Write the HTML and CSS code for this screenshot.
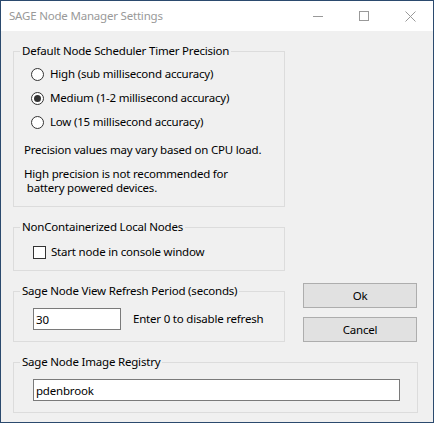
FILE: index.html
```html
<!DOCTYPE html>
<html lang="en">
<head>
<meta charset="utf-8">
<title>SAGE Node Manager Settings</title>
<link rel="stylesheet" href="styles.css">
</head>
<body>
<div class="window">
  <div class="titlebar">
    <span class="title">SAGE Node Manager Settings</span>
    <div class="controls">
      <span class="ctl"><svg width="10" height="10" viewBox="0 0 10 10"><line x1="0" y1="5.5" x2="10" y2="5.5" stroke="#999" stroke-width="1"/></svg></span>
      <span class="ctl"><svg width="10" height="10" viewBox="0 0 10 10"><rect x="0.5" y="0.5" width="9" height="9" fill="none" stroke="#999" stroke-width="1"/></svg></span>
      <span class="ctl"><svg width="11" height="11" viewBox="0 0 11 11"><path d="M0.5 0.5 L10.5 10.5 M10.5 0.5 L0.5 10.5" stroke="#999" stroke-width="1" fill="none"/></svg></span>
    </div>
  </div>
  <div class="client">
    <fieldset class="group g-precision">
      <legend>Default Node Scheduler Timer Precision</legend>
      <div class="radio"><span class="radio-mark"></span><span>High (sub millisecond accuracy)</span></div>
      <div class="radio"><span class="radio-mark checked"></span><span>Medium (1-2 millisecond accuracy)</span></div>
      <div class="radio"><span class="radio-mark"></span><span>Low (15 millisecond accuracy)</span></div>
      <p class="note">Precision values may vary based on CPU load.</p>
      <p class="note note-two">High precision is not recommended for<br>&nbsp;battery powered devices.</p>
    </fieldset>
    <fieldset class="group g-local">
      <legend>NonContainerized Local Nodes</legend>
      <div class="check"><span class="check-mark"></span><span>Start node in console window</span></div>
    </fieldset>
    <fieldset class="group g-refresh">
      <legend>Sage Node View Refresh Period (seconds)</legend>
      <div class="refresh-row">
        <input class="textbox short" type="text" value="30">
        <span class="hint">Enter 0 to disable refresh</span>
      </div>
    </fieldset>
    <div class="buttons">
      <button class="btn" type="button">Ok</button>
      <button class="btn" type="button">Cancel</button>
    </div>
    <fieldset class="group g-registry">
      <legend>Sage Node Image Registry</legend>
      <input class="textbox long" type="text" value="pdenbrook">
    </fieldset>
  </div>
</div>
</body>
</html>
```
FILE: styles.css
```css
* { box-sizing: border-box; }
html, body { margin: 0; padding: 0; }
body {
  font-family: "Noto Sans", "Open Sans", sans-serif;
  font-size: 11.5px;
  letter-spacing: -0.2px;
  color: #000;
  background: #f0f0f0;
}
.window {
  width: 434px;
  height: 423px;
  border: 1px solid #2b4a6e;
  background: #f0f0f0;
  display: flex;
  flex-direction: column;
}
.titlebar {
  height: 30px;
  background: #fff;
  display: flex;
  align-items: center;
  flex: none;
}
.title {
  padding-left: 8px;
  color: #999;
  line-height: 16px;
  flex: 1;
}
.controls { display: flex; height: 30px; }
.ctl {
  width: 46px;
  height: 30px;
  display: flex;
  align-items: center;
  justify-content: center;
}
.ctl svg { display: block; }
.client {
  flex: 1;
  display: grid;
  grid-template-columns: 272px 114px;
  column-gap: 18px;
  row-gap: 12px;
  align-items: start;
  align-content: start;
  padding: 12px 0 0 12px;
}
.group {
  margin: 0;
  border: 1px solid #dcdcdc;
  padding: 0;
  min-width: 0;
}
.group legend {
  margin-left: 6px;
  padding: 0 2px;
  line-height: 16px;
  height: 16px;
}
.g-precision { grid-column: 1; grid-row: 1; padding: 3px 0 11px 0; }
.g-local { grid-column: 1; grid-row: 2; padding: 9px 0 10px 0; }
.g-refresh { grid-column: 1; grid-row: 3; padding: 9px 0 11px 0; }
.buttons { grid-column: 2; grid-row: 3; display: flex; flex-direction: column; gap: 9px; }
.g-registry { grid-column: 1 / -1; grid-row: 4; width: 405px; padding: 9px 0 11px 0; }

.radio {
  height: 24px;
  display: flex;
  align-items: center;
  gap: 6px;
  padding-left: 17px;
  line-height: 16px;
}
.radio-mark {
  width: 13px;
  height: 13px;
  border: 1px solid #333;
  border-radius: 50%;
  background: #fff;
  display: flex;
  align-items: center;
  justify-content: center;
  flex: none;
}
.radio-mark.checked::after {
  content: "";
  width: 7px;
  height: 7px;
  border-radius: 50%;
  background: #333;
}
.note {
  margin: 8px 0 0 0;
  padding-left: 10px;
  line-height: 16px;
}
.note-two {
  margin-top: 9px;
  line-height: 14px;
}
.check {
  height: 16px;
  display: flex;
  align-items: center;
  gap: 5px;
  padding-left: 19px;
  line-height: 16px;
}
.check-mark {
  width: 13px;
  height: 13px;
  border: 1px solid #333;
  background: #fff;
  flex: none;
}
.refresh-row {
  display: flex;
  align-items: center;
  gap: 12px;
  padding-left: 19px;
}
.textbox {
  display: block;
  height: 22px;
  border: 1px solid #7a7a7a;
  background: #fff;
  font-family: inherit;
  font-size: 11.5px;
  letter-spacing: -0.2px;
  color: #000;
  padding: 0 2px;
  margin: 0;
  outline: none;
  border-radius: 0;
}
.textbox.short { width: 88px; }
.textbox.long { width: 367px; margin-left: 19px; }
.hint { line-height: 16px; }
.btn {
  width: 114px;
  height: 25px;
  background: #e1e1e1;
  border: 1px solid #adadad;
  border-radius: 0;
  font-family: inherit;
  font-size: 11.5px;
  letter-spacing: -0.2px;
  color: #000;
  padding: 0;
  margin: 0;
}
```
